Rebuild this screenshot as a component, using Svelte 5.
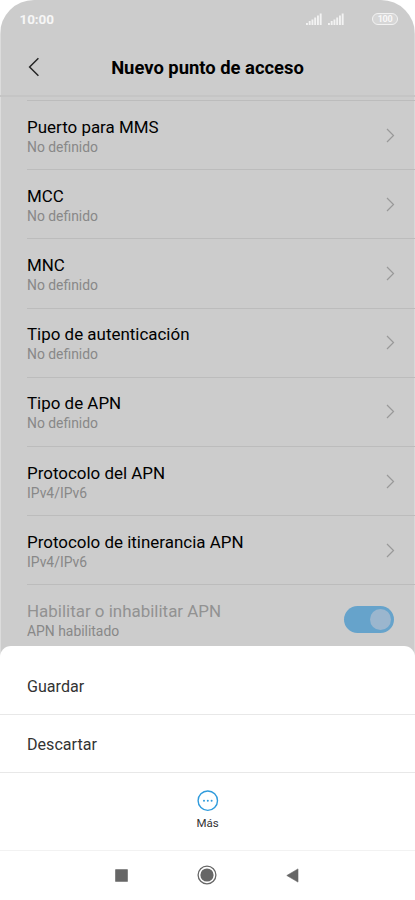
<script>
  // "Nuevo punto de acceso" settings screen, dimmed behind the options sheet.

  const items = [
    { title: "Puerto para MMS", value: "No definido" },
    { title: "MCC", value: "No definido" },
    { title: "MNC", value: "No definido" },
    { title: "Tipo de autenticación", value: "No definido" },
    { title: "Tipo de APN", value: "No definido" },
    { title: "Protocolo del APN", value: "IPv4/IPv6" },
    { title: "Protocolo de itinerancia APN", value: "IPv4/IPv6" },
  ];
  const actions = ["Guardar", "Descartar"];
  const bars = [2, 4, 5.5, 7.5, 9.5, 11.5];

  let enabled = $state(true);
</script>

{#snippet signal()}
  <svg class="signal" width="16" height="12" viewBox="0 0 16 12">
    {#each bars as h, i}
      <rect x={i * 2.75} y={12 - h} width="1.9" height={h} fill="#f2f2f2" />
    {/each}
  </svg>
{/snippet}

<div class="phone">
  <div class="status">
    <span class="time">10:00</span>
    <div class="status-icons">
      {@render signal()}
      {@render signal()}
      <span class="battery">100</span>
    </div>
  </div>

  <header>
    <button class="back" aria-label="Atrás">
      <svg width="12" height="20" viewBox="0 0 12 20">
        <path d="M10.4 1.2 1.6 10l8.8 8.8" fill="none" stroke="#262626" stroke-width="1.5" />
      </svg>
    </button>
    <h1>Nuevo punto de acceso</h1>
  </header>

  <main>
    {#each items as item}
      <div class="row">
        <div class="text">
          <div class="title">{item.title}</div>
          <div class="value">{item.value}</div>
        </div>
        <svg class="chevron" width="9" height="15" viewBox="0 0 9 15">
          <path d="M1 1l6.5 6.5L1 14" fill="none" stroke="#999" stroke-width="1.2" />
        </svg>
      </div>
    {/each}
    <div class="row disabled">
      <div class="text">
        <div class="title">Habilitar o inhabilitar APN</div>
        <div class="value">APN habilitado</div>
      </div>
      <button class="toggle" class:on={enabled} aria-label="APN" onclick={() => enabled = !enabled}>
        <span class="knob"></span>
      </button>
    </div>
  </main>

  <div class="sheet">
    {#each actions as action}
      <button class="action">{action}</button>
    {/each}
    <button class="more">
      <svg width="22" height="22" viewBox="0 0 22 22">
        <circle cx="10.8" cy="10.7" r="9.7" fill="none" stroke="#2f9bdc" stroke-width="1.4" />
        {#each [7, 10.8, 14.6] as x}
          <circle cx={x} cy="10.7" r="1" fill="#2f9bdc" />
        {/each}
      </svg>
      <span>Más</span>
    </button>
    <nav>
      <svg width="13" height="13" viewBox="0 0 13 13">
        <rect x="0.2" y="0.2" width="12.6" height="12.6" rx="0.5" fill="#666" />
      </svg>
      <svg width="20" height="20" viewBox="0 0 20 20">
        <circle cx="10" cy="10" r="8.9" fill="none" stroke="#666" stroke-width="1.3" />
        <circle cx="10" cy="10" r="6.6" fill="#666" />
      </svg>
      <svg width="13" height="15" viewBox="0 0 13 15">
        <path d="M0.8 7.5 12 0.9v13.2z" fill="#666" stroke="#666" stroke-width="0.6" stroke-linejoin="round" />
      </svg>
    </nav>
  </div>
</div>

<style>
  :global(body) { margin: 0; background: #fff; }
  .phone {
    width: 415px; height: 900px; overflow: hidden;
    display: flex; flex-direction: column;
    background: linear-gradient(to right, #dcdcdc 1px, #ccc 1px, #ccc 414px, #d8d8d8 414px);
    border-radius: 34px 34px 0 0;
    font-family: Roboto, sans-serif; color: #000;
  }
  button { border: 0; padding: 0; background: none; font: inherit; color: inherit; cursor: pointer; }
  svg { display: block; flex: none; }

  .status { flex: none; height: 37px; display: flex; justify-content: space-between; padding: 0 17px 0 19.5px; align-items: center; box-sizing: border-box; }
  .time { font-size: 13.5px; font-weight: 700; color: #f6f6f6; letter-spacing: -0.1px; padding-top: 1px; }
  .status-icons { display: flex; align-items: center; gap: 6px; }
  .battery {
    width: 26px; height: 12px; box-sizing: border-box; margin-left: 22px;
    border: 1px solid #f2f2f2; border-radius: 6px; background: #d6d6d6;
    color: #f8f8f8; font-size: 9px; font-weight: 700; line-height: 10px; text-align: center; letter-spacing: -0.3px;
  }

  header { flex: none; height: 60px; box-sizing: border-box; position: relative; border-bottom: 2px solid #c5c5c5; display: flex; align-items: center; justify-content: center; }
  .back { position: absolute; left: 28px; top: 20px; }
  h1 { margin: 0; font-size: 18.4px; font-weight: 700; line-height: 24px; padding-top: 3px; }

  main { flex: none; height: 548.5px; padding: 3px 0 0 27px; box-sizing: border-box; overflow: hidden; }
  .row {
    height: 69.2px; box-sizing: border-box; border-top: 1px solid #bcbcbc;
    display: flex; align-items: center; justify-content: space-between; padding: 0 20px 0 0;
  }
  .text { padding-top: 2px; }
  .title { font-size: 16.95px; line-height: 22px; }
  .value { font-size: 13.9px; line-height: 19px; color: #888; }
  .disabled { padding-right: 21px; }
  .disabled .title { color: #929292; }

  .toggle { width: 50px; height: 27px; border-radius: 14px; background: #aaa; padding: 3px; display: flex; box-sizing: border-box; }
  .toggle.on { background: #66a3cb; justify-content: flex-end; }
  .knob { width: 21px; height: 21px; border-radius: 50%; background: #9bb6ce; }

  .sheet { flex: 1; background: #fff; border-radius: 11px 11px 0 0; padding-top: 11px; display: flex; flex-direction: column; }
  .action {
    flex: none; height: 58px; box-sizing: border-box; border-bottom: 1px solid #e8e8e8; padding: 2px 27px 0;
    text-align: left; font-size: 16.1px; color: #333;
  }
  .more { flex: none; height: 78px; box-sizing: border-box; border-bottom: 1px solid #f2f2f2; display: flex; flex-direction: column; align-items: center; gap: 3px; padding-top: 17px; }
  .more span { font-size: 11.5px; line-height: 16px; color: #333; }
  nav { display: flex; align-items: center; justify-content: center; gap: 69px; height: 49px; padding-right: 2px; }
</style>
